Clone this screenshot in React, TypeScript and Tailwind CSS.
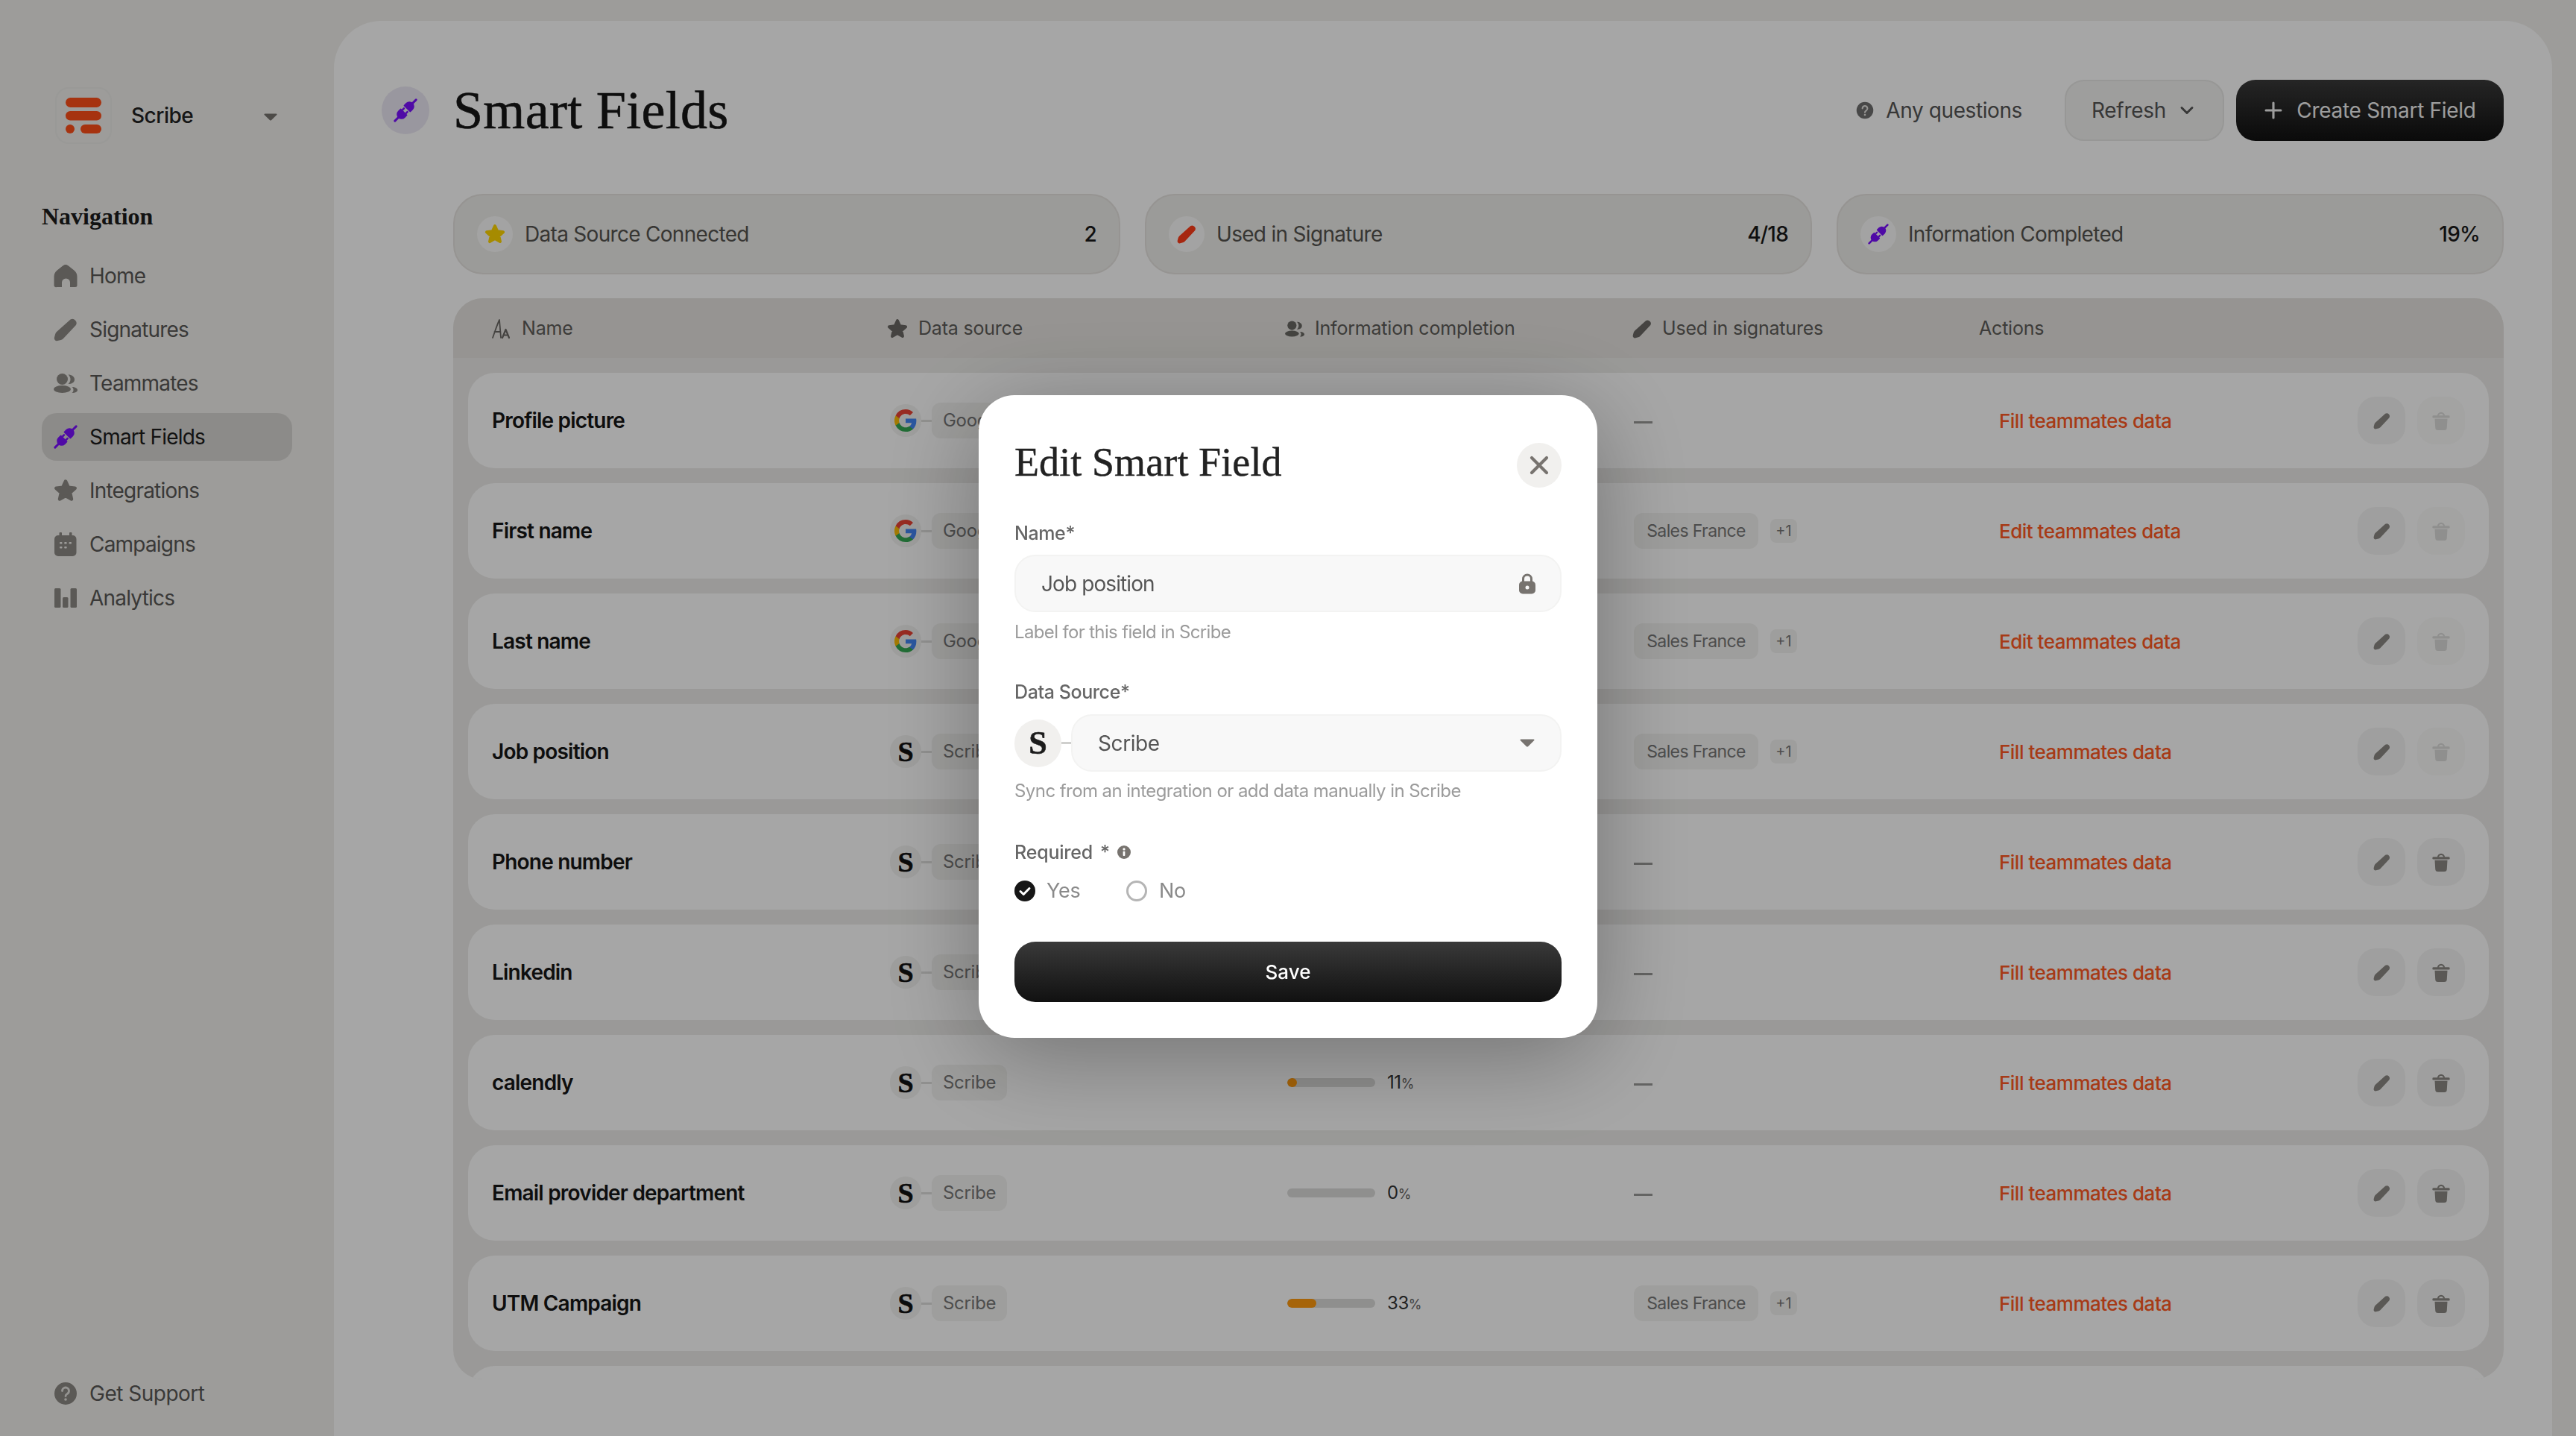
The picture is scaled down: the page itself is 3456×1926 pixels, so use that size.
import React from "react";
import { ChevronDown, Plus, X } from "lucide-react";

const serif = "font-['Liberation_Serif',serif]";

type IconProps = { className?: string };

function HomeIcon({ className }: IconProps) {
  return (
    <svg viewBox="0 0 32 30" className={className} fill="currentColor">
      <path d="M16 0c1.500 0 2.700.6 3.800 1.500l7.500 6c2.700 2.200 4.200 5 4.200 8.500v11.500a2.500 2.500 0 0 1-2.500 2.500h-7v-6a5.500 5.500 0 0 0-11 0v6h-7A2.500 2.500 0 0 1 .5 27.500V16c0-3.500 1.500-6.300 4.200-8.500l7.500-6C13.300.6 14.500 0 16 0z" />
    </svg>
  );
}

function PencilIcon({ className }: IconProps) {
  return (
    <svg viewBox="0 0 32 32" className={className} fill="currentColor">
      <path d="M22.500 2.500a5.500 5.500 0 0 1 7.200 7.800L13 28a7 7 0 0 1-3.200 1.900l-4.600 1.200a3.500 3.500 0 0 1-4.300-4.300l1.200-4.600A7 7 0 0 1 4 19z" />
    </svg>
  );
}

function TeamIcon({ className }: IconProps) {
  return (
    <svg viewBox="0 0 32 26" className={className} fill="currentColor">
      <circle cx="11.500" cy="7.500" r="7.500" />
      <ellipse cx="11.500" cy="21" rx="11.500" ry="5" />
      <path d="M19.500 1.500C24 1.500 28 4 28 8s-4 6-8.500 6c2-1.500 3-4 3-6.200s-1-4.800-3-6.300zM24.500 18c4 0 7.500 1.800 7.500 4.200S28.500 26 24.500 26c1.500-1 2-2.500 2-4s-.5-3-2-4z" />
    </svg>
  );
}

// two plug halves drawn on a flat axis, then turned on the diagonal
function PlugIcon({ className }: IconProps) {
  return (
    <svg viewBox="-16 -16 32 32" className={className} fill="currentColor">
      <g transform="rotate(-45)">
        <path d="M3.500-6.500h4a6.500 6.500 0 0 1 0 13h-4a1 1 0 0 1-1-1v-11a1 1 0 0 1 1-1z" />
        <rect x="12" y="-1.500" width="9.500" height="3" rx="1.500" />
        <path d="M-3.500-6.500h-4a6.500 6.500 0 0 0 0 13h4a1 1 0 0 0 1-1v-11a1 1 0 0 0-1-1z" />
        <rect x="-21.500" y="-1.500" width="9.500" height="3" rx="1.500" />
        <rect x="-3" y="-4.500" width="4.500" height="2.500" rx="0.800" />
        <rect x="-3" y="2" width="4.500" height="2.500" rx="0.800" />
      </g>
    </svg>
  );
}

function StarIcon({ className }: IconProps) {
  return (
    <svg viewBox="0 0 32 32" className={className} fill="currentColor" stroke="currentColor" strokeWidth="4.500" strokeLinejoin="round">
      <path d="M16 3.500l3.800 8.300 8.900 1-6.700 6 2 8.700-8-4.500-8 4.500 2-8.700-6.700-6 8.900-1z" />
    </svg>
  );
}

function CalendarIcon({ className }: IconProps) {
  return (
    <svg viewBox="0 0 32 32" className={className}>
      <path fill="currentColor" d="M8.500 0h1.500a1 1 0 0 1 1 1v3h10V1a1 1 0 0 1 1-1h1.500a1 1 0 0 1 1 1v3h1a5 5 0 0 1 5 5v18a5 5 0 0 1-5 5H6a5 5 0 0 1-5-5V9a5 5 0 0 1 5-5h1.500V1a1 1 0 0 1 1-1z" />
      <g fill="#f1f0ed">
        <rect x="8" y="13" width="3.500" height="2.500" rx="1" />
        <rect x="14.200" y="13" width="3.500" height="2.500" rx="1" />
        <rect x="20.500" y="13" width="3.500" height="2.500" rx="1" />
        <rect x="8" y="19" width="3.500" height="2.500" rx="1" />
        <rect x="14.200" y="19" width="3.500" height="2.500" rx="1" />
      </g>
    </svg>
  );
}

function ChartIcon({ className }: IconProps) {
  return (
    <svg viewBox="0 0 32 32" className={className} fill="currentColor">
      <rect x="1" y="3" width="8.500" height="26" rx="1.500" />
      <rect x="12" y="15" width="7.500" height="14" rx="1.500" />
      <rect x="22.500" y="3" width="8.500" height="26" rx="1.500" />
    </svg>
  );
}

function QuestionIcon({ className }: IconProps) {
  return (
    <svg viewBox="0 0 32 32" className={className}>
      <circle cx="16" cy="16" r="15" fill="currentColor" />
      <path d="M11.500 12.500a4.500 4.500 0 1 1 6.800 3.900c-1.500.9-2.300 1.700-2.300 3.100" fill="none" stroke="#e5e4e1" strokeWidth="2.800" strokeLinecap="round" />
      <circle cx="16" cy="24" r="1.800" fill="#e5e4e1" />
    </svg>
  );
}

function FontSizeIcon({ className }: IconProps) {
  return (
    <svg viewBox="0 0 24 28" className={className} fill="none" stroke="currentColor" strokeWidth="1.800" strokeLinecap="round" strokeLinejoin="round">
      <path d="M1 26C4 18 7 8 10 2l2 24M3.500 18H11.500" />
      <path d="M14 26l4.500-11L23 26M15.500 22.500h6" strokeWidth="2.200" />
    </svg>
  );
}

function TrashIcon({ className }: IconProps) {
  return (
    <svg viewBox="0 0 26 28" className={className} fill="currentColor">
      <path d="M8.500 6.500a4.500 4.500 0 0 1 9 0" fill="none" stroke="currentColor" strokeWidth="2.500" />
      <rect x="0" y="6" width="26" height="3.500" rx="1.500" />
      <path d="M3.500 11h19l-.8 13a4 4 0 0 1-4 4H8.300a4 4 0 0 1-4-4z" />
    </svg>
  );
}

function LockIcon({ className }: IconProps) {
  return (
    <svg viewBox="0 0 24 28" className={className}>
      <path d="M6.500 12V7.500a5.500 5.500 0 0 1 11 0V12" fill="none" stroke="currentColor" strokeWidth="3" />
      <rect x="1" y="10.500" width="22" height="17" rx="5" fill="currentColor" />
      <circle cx="12" cy="19" r="2.500" fill="#f7f7f7" />
    </svg>
  );
}

function GoogleIcon({ className }: IconProps) {
  return (
    <svg viewBox="0 0 24 24" className={className}>
      <path fill="#4285F4" d="M23.500 12.300c0-.8-.1-1.600-.2-2.300H12v4.500h6.500a5.500 5.500 0 0 1-2.400 3.600v3h3.900c2.200-2.100 3.500-5.200 3.500-8.800z" />
      <path fill="#34A853" d="M12 24c3.200 0 6-1.100 8-2.900l-3.900-3c-1.100.7-2.500 1.200-4.100 1.200-3.100 0-5.800-2.100-6.700-5H1.300v3.100A12 12 0 0 0 12 24z" />
      <path fill="#FBBC05" d="M5.300 14.300a7.200 7.200 0 0 1 0-4.600V6.600h-4a12 12 0 0 0 0 10.800z" />
      <path fill="#EA4335" d="M12 4.800c1.800 0 3.300.6 4.600 1.800l3.400-3.400A11.500 11.500 0 0 0 12 0 12 12 0 0 0 1.300 6.600l4 3.100c.9-2.800 3.600-4.900 6.700-4.900z" />
    </svg>
  );
}

function LogoMark({ className }: IconProps) {
  return (
    <svg viewBox="0 0 48 48" className={className} fill="#ff4f1a">
      <rect x="0" y="0" width="48" height="13" rx="6.500" />
      <rect x="0" y="18" width="48" height="12.500" rx="6.250" />
      <circle cx="6" cy="42" r="6" />
      <rect x="20" y="36" width="28" height="12" rx="6" />
    </svg>
  );
}

const navItems = [
  { label: "Home", Icon: HomeIcon },
  { label: "Signatures", Icon: PencilIcon },
  { label: "Teammates", Icon: TeamIcon },
  { label: "Smart Fields", Icon: PlugIcon, active: true },
  { label: "Integrations", Icon: StarIcon },
  { label: "Campaigns", Icon: CalendarIcon },
  { label: "Analytics", Icon: ChartIcon },
];

const rows = [
  { name: "Profile picture", source: "Google", pct: 0, used: false, action: "Fill teammates data", locked: true },
  { name: "First name", source: "Google", pct: 100, used: true, action: "Edit teammates data", locked: true },
  { name: "Last name", source: "Google", pct: 100, used: true, action: "Edit teammates data", locked: true },
  { name: "Job position", source: "Scribe", pct: 22, used: true, action: "Fill teammates data", locked: true },
  { name: "Phone number", source: "Scribe", pct: 11, used: false, action: "Fill teammates data", locked: false },
  { name: "Linkedin", source: "Scribe", pct: 11, used: false, action: "Fill teammates data", locked: false },
  { name: "calendly", source: "Scribe", pct: 11, used: false, action: "Fill teammates data", locked: false },
  { name: "Email provider department", source: "Scribe", pct: 0, used: false, action: "Fill teammates data", locked: false },
  { name: "UTM Campaign", source: "Scribe", pct: 33, used: true, action: "Fill teammates data", locked: false },
];

function StatCard({ icon, label, value }: { icon: React.ReactNode; label: string; value: string }) {
  return (
    <div className="flex h-[108px] flex-1 items-center rounded-[40px] border-2 border-[#e6e4e0] bg-[#efeeeb] pl-[30px] pr-[30px]">
      <div className="flex h-[48px] w-[48px] items-center justify-center rounded-full bg-[#fbfbfa]">{icon}</div>
      <span className="ml-[16px] text-[28px] tracking-[-0.7px] text-[#55534f]">{label}</span>
      <span className="ml-auto text-[28px] font-medium tracking-[-0.8px] text-[#1a1a1a]">{value}</span>
    </div>
  );
}

function Row({ row }: { row: (typeof rows)[number] }) {
  return (
    <div className="grid h-[128px] shrink-0 grid-cols-[534px_533px_465px_490px_1fr] items-center rounded-[36px] bg-white pl-[32px] pr-[32px]">
      <span className="text-[28px] font-semibold tracking-[-0.8px] text-[#161616]">{row.name}</span>
      <div className="flex items-center">
        <div className="flex h-[44px] w-[42px] items-center justify-center rounded-full bg-[#f3f3f1]">
          {row.source === "Google" ? (
            <GoogleIcon className="h-[30px] w-[30px]" />
          ) : (
            <span className={`${serif} text-[38px] font-bold leading-none text-[#111] [-webkit-text-stroke:0.6px_#111]`}>S</span>
          )}
        </div>
        <div className="h-[3px] w-[14px] bg-[#dededc]" />
        <div className="flex h-[48px] items-center rounded-[12px] bg-[#f3f3f1] px-[15px] text-[24px] tracking-[-0.3px] text-[#777]">
          {row.source}
        </div>
      </div>
      <div className="flex items-center">
        <div className="h-[12px] w-[118px] overflow-hidden rounded-full bg-[#dcdcda]">
          <div className="h-full rounded-full bg-[#ff9a0f]" style={{ width: `${row.pct}%` }} />
        </div>
        <span className="ml-[16px] text-[24px] tracking-[-0.4px] text-[#333]">
          {row.pct}
          <span className="text-[18px] text-[#666]">%</span>
        </span>
      </div>
      {row.used ? (
        <div className="flex items-center">
          <div className="flex h-[48px] w-[167px] items-center justify-center rounded-[12px] bg-[#f3f3f1] text-[23px] tracking-[-0.6px] text-[#777]">
            Sales France
          </div>
          <div className="ml-[16px] flex h-[32px] w-[36px] items-center justify-center rounded-[8px] bg-[#f3f3f1] text-[20px] text-[#777]">
            +1
          </div>
        </div>
      ) : (
        <div className="mt-[4px] h-[3px] w-[25px] bg-[#9a9a98]" />
      )}
      <div className="flex items-center justify-between">
        <span className="text-[26px] font-medium tracking-[-0.5px] text-[#ff5a24]">{row.action}</span>
        <div className="flex gap-[16px]">
          <button className="flex h-[64px] w-[64px] items-center justify-center rounded-[24px] bg-[#f5f5f4] text-[#8a8883]">
            <PencilIcon className="h-[23px] w-[23px]" />
          </button>
          <button
            className={`flex h-[64px] w-[64px] items-center justify-center rounded-[24px] ${
              row.locked ? "bg-[#fafaf9] text-[#dcdcda]" : "bg-[#f5f5f4] text-[#8a8883]"
            }`}
          >
            <TrashIcon className="h-[25px] w-[24px]" />
          </button>
        </div>
      </div>
    </div>
  );
}

function EditModal() {
  return (
    <div className="fixed inset-0 flex items-center justify-center bg-black/35 pb-[4px]">
      <div className="flex h-[862px] w-[830px] flex-col rounded-[48px] bg-white px-[48px] shadow-[0_24px_130px_rgba(0,0,0,0.32)]">
        <div className="mt-[64px] flex h-[60px] items-center justify-between">
          <h2 className={`${serif} mb-[8px] text-[54px] leading-none tracking-[0.1px] text-[#222] [-webkit-text-stroke:0.4px_#222]`}>Edit Smart Field</h2>
          <button className="flex h-[60px] w-[60px] items-center justify-center rounded-full bg-[#f1f0ee] text-[#77736f]">
            <X className="h-[40px] w-[40px]" strokeWidth={2.5} />
          </button>
        </div>
        <label className="mt-[46px] text-[25px] font-medium leading-[30px] tracking-[-0.4px] text-[#666]">Name*</label>
        <div className="mt-[14px] flex h-[77px] items-center justify-between rounded-[28px] border-2 border-[#f3f3f2] bg-[#f8f8f8] pl-[34px] pr-[32px]">
          <span className="text-[28px] tracking-[-0.9px] text-[#555]">Job position</span>
          <LockIcon className="h-[28px] w-[24px] text-[#77736f]" />
        </div>
        <p className="mt-[12px] text-[24px] leading-[30px] tracking-[-0.65px] text-[#9b9b9b]">Label for this field in Scribe</p>
        <label className="mt-[50px] text-[25px] font-medium leading-[30px] tracking-[-0.4px] text-[#666]">Data Source*</label>
        <div className="mt-[15px] flex items-center">
          <div className="flex h-[64px] w-[63px] items-center justify-center rounded-full bg-[#f1f0ee]">
            <span className={`${serif} text-[44px] font-bold leading-none text-[#1b1b1b] [-webkit-text-stroke:0.6px_#1b1b1b]`}>S</span>
          </div>
          <div className="h-[3px] w-[13px] bg-[#cfcfcd]" />
          <div className="flex h-[77px] flex-1 items-center justify-between rounded-[28px] border-2 border-[#f3f3f2] bg-[#f8f8f8] pl-[34px] pr-[34px]">
            <span className="text-[28px] tracking-[-0.4px] text-[#555]">Scribe</span>
            <svg viewBox="0 0 20 10" className="h-[11px] w-[20px] text-[#77736f]" fill="currentColor">
              <path d="M1.500 0h17a1 1 0 0 1 .8 1.600l-8 7.800a1.800 1.800 0 0 1-2.600 0L.7 1.600A1 1 0 0 1 1.500 0z" />
            </svg>
          </div>
        </div>
        <p className="mt-[11px] text-[24px] leading-[30px] tracking-[-0.56px] text-[#9b9b9b]">
          Sync from an integration or add data manually in Scribe
        </p>
        <div className="mt-[52px] flex items-center text-[25px] font-medium leading-[30px] tracking-[-0.2px] text-[#666]">
          Required
          <span className="ml-[10px]">*</span>
          <svg viewBox="0 0 20 20" className="ml-[10px] h-[18px] w-[18px] text-[#77736f]">
            <circle cx="10" cy="10" r="10" fill="currentColor" />
            <rect x="8.500" y="8.500" width="3" height="7" rx="1" fill="#fff" />
            <circle cx="10" cy="5.500" r="1.800" fill="#fff" />
          </svg>
        </div>
        <div className="mt-[22px] flex h-[30px] items-center text-[27px] tracking-[-0.3px] text-[#8a8a8a]">
          <svg viewBox="0 0 28 28" className="h-[28px] w-[28px]">
            <circle cx="14" cy="14" r="14" fill="#161616" />
            <path d="M8 14.500l4.200 4L20 10.500" fill="none" stroke="#fff" strokeWidth="3" strokeLinecap="round" strokeLinejoin="round" />
          </svg>
          <span className="ml-[15px] w-[107px]">Yes</span>
          <div className="h-[28px] w-[28px] rounded-full border-[3px] border-[#b5b5b5]" />
          <span className="ml-[16px]">No</span>
        </div>
        <button className="mt-[53px] h-[81px] w-full rounded-[28px] bg-gradient-to-b from-[#3a3a3a] to-[#111111] text-[26px] font-medium text-white">
          Save
        </button>
      </div>
    </div>
  );
}

export default function App() {
  return (
    <div className="flex h-screen w-full overflow-hidden bg-[#f1f0ed] font-['Inter',sans-serif]">
      {/* Sidebar */}
      <aside className="flex h-full w-[448px] shrink-0 flex-col px-[56px] pb-[25px] pt-[117px]">
        <div className="ml-[18px] flex h-[76px] items-center">
          <div className="flex h-[76px] w-[76px] items-center justify-center rounded-[18px] border-2 border-[#ecebe8]">
            <LogoMark className="h-[48px] w-[48px]" />
          </div>
          <span className="ml-[26px] text-[28px] font-medium tracking-[-0.5px] text-[#222]">Scribe</span>
          <svg viewBox="0 0 20 10" className="ml-auto mr-[20px] mt-[4px] h-[10px] w-[18px] text-[#77736f]" fill="currentColor">
            <path d="M1.500 0h17a1 1 0 0 1 .8 1.600l-8 7.800a1.800 1.800 0 0 1-2.600 0L.7 1.600A1 1 0 0 1 1.500 0z" />
          </svg>
        </div>
        <h3 className={`${serif} mt-[77px] h-[40px] text-[32px] font-bold leading-[40px] text-[#1c1c1c]`}>Navigation</h3>
        <nav className="mt-[28px] flex flex-col gap-[8px]">
          {navItems.map(({ label, Icon, active }) => (
            <a
              key={label}
              className={`flex h-[64px] items-center gap-[16px] rounded-[20px] px-[16px] text-[28px] tracking-[-0.8px] ${
                active ? "bg-[#d8d6d3] text-[#1c1c1c]" : "text-[#5a5856]"
              }`}
            >
              <Icon className={`h-[32px] w-[32px] ${active ? "text-[#7a10ff]" : "text-[#8d8984]"}`} />
              {label}
            </a>
          ))}
        </nav>
        <a className="mt-auto flex h-[64px] items-center gap-[16px] px-[16px] text-[28px] tracking-[-0.5px] text-[#5a5856]">
          <QuestionIcon className="h-[32px] w-[32px] text-[#8d8984]" />
          Get Support
        </a>
      </aside>

      {/* Main */}
      <main className="mr-[32px] mt-[28px] flex h-[calc(100%-28px)] flex-1 flex-col rounded-t-[64px] bg-white pl-[64px] pr-[65px] pt-[79px]">
        <header className="flex h-[82px] items-center">
          <div className="flex h-[64px] w-[64px] items-center justify-center rounded-full bg-[#ece9f4]">
            <PlugIcon className="h-[32px] w-[32px] text-[#7a10ff]" />
          </div>
          <h1 className={`${serif} ml-[32px] text-[72px] leading-none tracking-[0.3px] text-[#161616] [-webkit-text-stroke:0.6px_#161616]`}>Smart Fields</h1>
          <div className="ml-auto flex items-center gap-[16px]">
            <QuestionIcon className="h-[24px] w-[24px] text-[#6f6f6f]" />
            <span className="text-[28px] tracking-[-0.4px] text-[#555]">Any questions</span>
          </div>
          <button className="ml-[57px] flex h-[82px] w-[214px] items-center justify-center gap-[14px] rounded-[26px] border-2 border-[#e8e8e6] bg-[#f3f3f2] text-[28px] tracking-[-0.3px] text-[#555]">
            Refresh
            <ChevronDown className="h-[28px] w-[28px]" strokeWidth={2.5} />
          </button>
          <button className="ml-[16px] flex h-[82px] w-[359px] items-center justify-center gap-[14px] rounded-[26px] bg-gradient-to-b from-[#3a3a3a] to-[#111111] pr-[4px] text-[28px] tracking-[-0.3px] text-[#f1f1f1]">
            <Plus className="h-[34px] w-[34px]" strokeWidth={2.2} />
            Create Smart Field
          </button>
        </header>

        <div className="ml-[96px] mt-[71px] flex gap-[33px]">
          <StatCard icon={<StarIcon className="h-[28px] w-[28px] text-[#ffd600]" />} label="Data Source Connected" value="2" />
          <StatCard icon={<PencilIcon className="h-[26px] w-[26px] text-[#ff3d1a]" />} label="Used in Signature" value="4/18" />
          <StatCard icon={<PlugIcon className="h-[28px] w-[28px] text-[#7a10ff]" />} label="Information Completed" value="19%" />
        </div>

        <div className="ml-[96px] mt-[32px] h-[1450px] overflow-hidden rounded-[40px] bg-[#edecea]">
          <div className="grid h-[80px] grid-cols-[530px_534px_466px_465px_1fr] items-center bg-[#e6e4e0] pl-[52px] pt-[2px] text-[25px] tracking-[-0.2px] text-[#5e5c59]">
            <div className="flex items-center gap-[16px]">
              <FontSizeIcon className="h-[28px] w-[24px] text-[#6a6864]" />
              Name
            </div>
            <div className="flex items-center gap-[14px]">
              <StarIcon className="h-[28px] w-[28px] text-[#6a6864]" />
              Data source
            </div>
            <div className="flex items-center gap-[14px]">
              <TeamIcon className="h-[22px] w-[26px] text-[#6a6864]" />
              Information completion
            </div>
            <div className="flex items-center gap-[14px]">
              <PencilIcon className="h-[26px] w-[26px] text-[#6a6864]" />
              Used in signatures
            </div>
            <div>Actions</div>
          </div>
          <div className="flex flex-col gap-[20px] px-[20px] pt-[20px]">
            {rows.map((row) => (
              <Row key={row.name} row={row} />
            ))}
            <div className="h-[128px] shrink-0 rounded-[36px] bg-white" />
          </div>
        </div>
      </main>

      <EditModal />
    </div>
  );
}
